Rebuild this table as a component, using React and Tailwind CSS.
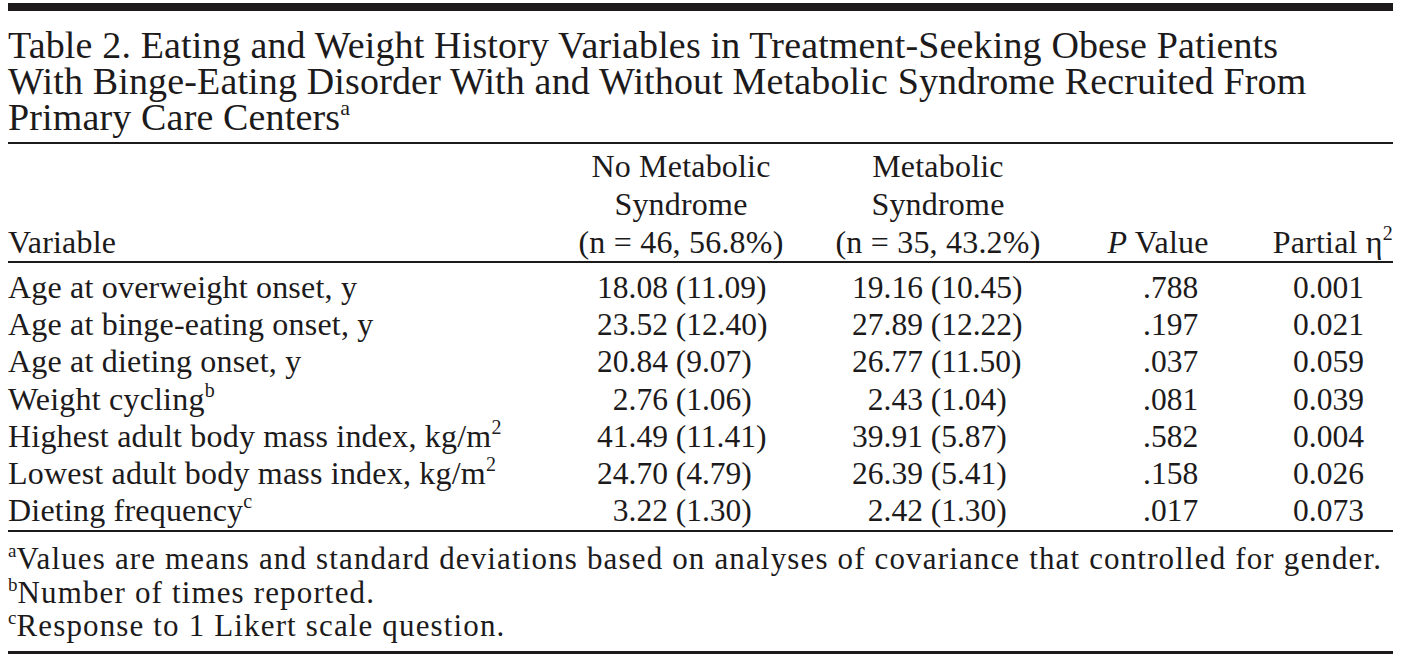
import React from 'react'

const rows = [
  ['Age at overweight onset, y', null, '18.08 (11.09)', '19.16 (10.45)', '.788', '0.001'],
  ['Age at binge-eating onset, y', null, '23.52 (12.40)', '27.89 (12.22)', '.197', '0.021'],
  ['Age at dieting onset, y', null, '20.84 (9.07)', '26.77 (11.50)', '.037', '0.059'],
  ['Weight cycling', 'b', '2.76 (1.06)', '2.43 (1.04)', '.081', '0.039'],
  ['Highest adult body mass index, kg/m', '2', '41.49 (11.41)', '39.91 (5.87)', '.582', '0.004'],
  ['Lowest adult body mass index, kg/m', '2', '24.70 (4.79)', '26.39 (5.41)', '.158', '0.026'],
  ['Dieting frequency', 'c', '3.22 (1.30)', '2.42 (1.30)', '.017', '0.073'],
]

// single-digit means get a hidden digit so the columns line up
function Num({ value }) {
  const pad = value.indexOf('.') === 1
  return (
    <>
      {pad && <span className="invisible">0</span>}
      {value}
    </>
  )
}

const cols = 'grid grid-cols-[554px_238px_276px_164px_153px]'

export default function App() {
  return (
    <div
      className="w-[1401px] h-[660px] bg-white px-[8px] pt-[3px] text-[#1c1a1b]"
      style={{ fontFamily: '"Liberation Serif", "Times New Roman", serif' }}
    >
      {/* top rule */}
      <div className="h-[8px] bg-[#1c1a1b]" />

      {/* caption */}
      <h1 className="pt-[16px] text-[38px] leading-[36px] font-normal tracking-[0.15px]">
        Table 2. Eating and Weight History Variables in Treatment-Seeking Obese Patients
        <br />
        With Binge-Eating Disorder With and Without Metabolic Syndrome Recruited From
        <br />
        Primary Care Centers<sup className="text-[22px] relative -top-[15px]">a</sup>
      </h1>

      <div className="mt-[7px] h-[2px] bg-[#1c1a1b]" />

      {/* header */}
      <div className={`${cols} pt-[3px] text-[32px] leading-[38px] tracking-[0.2px]`}>
        <div className="self-end">Variable</div>
        <div className="text-center whitespace-nowrap">
          No Metabolic
          <br />
          Syndrome
          <br />
          (n = 46, 56.8%)
        </div>
        <div className="text-center whitespace-nowrap">
          Metabolic
          <br />
          Syndrome
          <br />
          (n = 35, 43.2%)
        </div>
        <div className="self-end text-center">
          <i>P</i> Value
        </div>
        <div className="self-end text-right whitespace-nowrap">
          Partial η<sup className="text-[20px] relative -top-[13px]">2</sup>
        </div>
      </div>

      <div className="h-[2px] bg-[#1c1a1b]" />

      {/* body */}
      <div className="pt-[6px] pb-[1px] text-[32px] leading-[37.2px]">
        {rows.map(([label, sup, a, b, p, eta]) => (
          <div key={label} className={cols}>
            <div className="whitespace-nowrap tracking-[0.2px]">
              {label}
              {sup && <sup className="text-[20px] relative -top-[13px]">{sup}</sup>}
            </div>
            <div className="pl-[35px] whitespace-nowrap text-[31.5px]">
              <Num value={a} />
            </div>
            <div className="pl-[52px] whitespace-nowrap text-[31.5px]">
              <Num value={b} />
            </div>
            <div className="pl-[67px] text-[31.5px]">{p}</div>
            <div className="pl-[53px] text-[31.5px]">{eta}</div>
          </div>
        ))}
      </div>

      <div className="h-[2px] bg-[#1c1a1b]" />

      {/* footnotes */}
      <div className="pt-[10px] text-[31px] leading-[33.5px] tracking-[1.15px] whitespace-nowrap">
        <p>
          <sup className="text-[19px] relative -top-[12px] tracking-normal">a</sup>Values are means and standard deviations based on analyses of covariance that controlled for gender.
        </p>
        <p>
          <sup className="text-[19px] relative -top-[12px] tracking-normal">b</sup>Number of times reported.
        </p>
        <p>
          <sup className="text-[19px] relative -top-[12px] tracking-normal">c</sup>Response to 1 Likert scale question.
        </p>
      </div>

      <div className="mt-[8px] h-[3px] bg-[#1c1a1b]" />
    </div>
  )
}
